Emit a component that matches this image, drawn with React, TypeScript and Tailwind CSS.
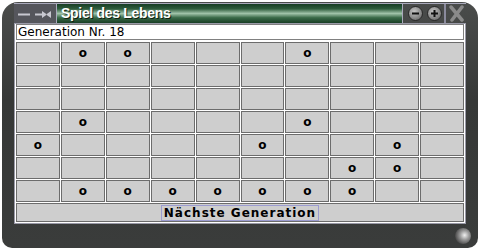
import { useState } from 'react'

const ROWS: number[][] = [
    [2, 3, 7],
    [],
    [],
    [2, 7],
    [1, 6, 9],
    [8, 9],
    [2, 3, 4, 5, 6, 7, 8],
]

function TitleIcons() {
    return (
        <svg width="42" height="18" viewBox="0 0 42 18">
            <line x1="4" y1="9.5" x2="16" y2="9.5" stroke="#c8c8d0" strokeWidth="2" />
            <line x1="21" y1="9.5" x2="28" y2="9.5" stroke="#c8c8d0" strokeWidth="2" />
            <path d="M28 6 L33 9.5 L28 13 Z M37 6 L32 9.5 L37 13 Z" fill="#c8c8d0" />
        </svg>
    )
}

function RoundButton({ plus }: { plus?: boolean }) {
    return (
        <div className="flex h-[15px] w-[15px] items-center justify-center rounded-full border border-[#2a2a2a] bg-[radial-gradient(circle_at_40%_35%,#c4c4c4_0%,#8c8c8c_55%,#5a5a5a_100%)]">
            <svg width="9" height="9" viewBox="0 0 9 9">
                <rect x="1" y="3.5" width="7" height="2" fill="#111" />
                {plus && <rect x="3.5" y="1" width="2" height="7" fill="#111" />}
            </svg>
        </div>
    )
}

export default function App() {
    const [gen] = useState(18)

    return (
        <div className="h-[250px] w-[480px] bg-white pl-[2px] pt-[2px]">
            <div className="flex h-[246px] w-[476px] flex-col rounded-t-[16px] rounded-b-[10px] bg-[linear-gradient(to_bottom,#4a4c4b,#363837_40%,#3a3c3b)] px-[12px] pt-[1px]">
                {/* title bar */}
                <div className="flex h-[20px] border-t border-[#a9a9bb]">
                    <div className="flex w-[42px] items-center bg-[#55565c]">
                        <TitleIcons />
                    </div>
                    <div className="flex flex-1 items-center border-x border-[#a9a9bb] bg-[linear-gradient(to_bottom,#173d24_0%,#2e5c3c_25%,#9fc2a8_50%,#3a6a48_72%,#173d24_100%)] pl-[4px]">
                        <span className="font-['Liberation_Sans',sans-serif] text-[14px] font-bold tracking-[-0.3px] text-white [text-shadow:1px_1px_0_#102010]">
                            Spiel des Lebens
                        </span>
                    </div>
                    <div className="flex items-center gap-[4px] pl-[5px] pr-[2px]">
                        <RoundButton />
                        <RoundButton plus />
                    </div>
                    <div className="flex w-[22px] items-center justify-center border-l-2 border-[#8a8a9c]">
                        <svg width="17" height="17" viewBox="0 0 17 17">
                            <path d="M3 2 L14 15 M14 2 L4 15" stroke="#8a8a8a" strokeWidth="3.5" strokeLinecap="round" />
                        </svg>
                    </div>
                </div>

                {/* content */}
                <div className="flex h-[201px] flex-col gap-[1px] border border-[#9a9aa8] bg-white p-[1px] pt-0">
                    <div className="flex h-[16px] items-center border border-[#808080] px-[1px] font-['DejaVu_Sans',sans-serif] text-[12px] text-black">
                        Generation Nr. {gen}
                    </div>
                    <div className="grid grid-cols-10 gap-[1px] pt-[1px]">
                        {ROWS.map((row, r) =>
                            Array.from({ length: 10 }, (_, c) => (
                                <div
                                    key={r * 10 + c}
                                    className="flex h-[22px] items-center justify-center border border-[#6c6c6c] bg-[#cecece] font-['DejaVu_Sans',sans-serif] text-[12px] font-bold text-black"
                                >
                                    {row.includes(c + 1) ? 'o' : ''}
                                </div>
                            ))
                        )}
                    </div>
                    <div className="flex h-[21px] items-center justify-center border border-[#6c6c6c] bg-[#cecece]">
                        <button className="border border-[#9c9cd0] px-[2px] font-['DejaVu_Sans',sans-serif] text-[12px] font-bold leading-[14px] tracking-[1px] text-black">
                            Nächste Generation
                        </button>
                    </div>
                </div>

                {/* bottom bar */}
                <div className="flex flex-1 items-center justify-end">
                    <div className="-mr-[5px] h-[16px] w-[16px] rounded-full bg-[radial-gradient(circle_at_60%_45%,#f0f0f0_0%,#9a9a9a_35%,#3a3a3a_80%)]" />
                </div>
            </div>
        </div>
    )
}
